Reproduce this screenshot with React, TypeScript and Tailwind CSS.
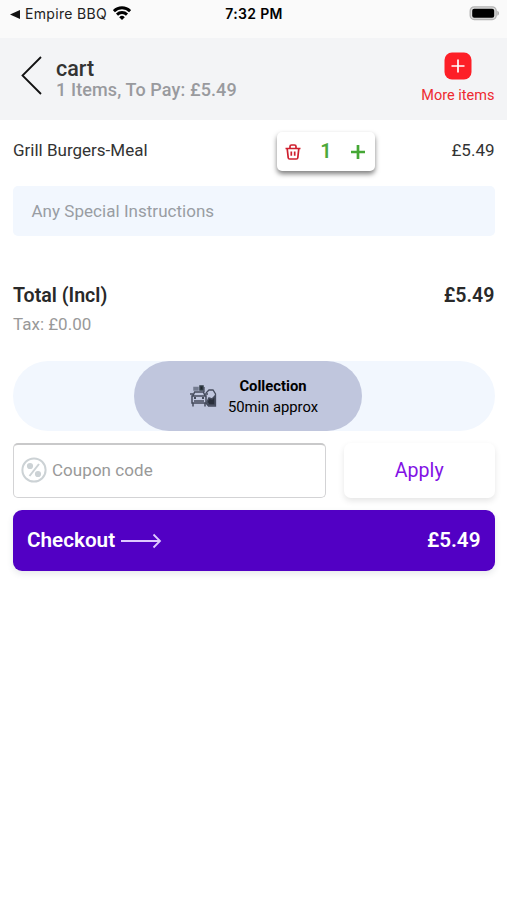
import React from "react";

function StatusBar() {
  return (
    <div className="grid h-[38px] grid-cols-3 items-start bg-[#fafafa] px-2 pt-[4px] font-['Inter'] text-[14px] leading-5 text-[#222]">
      <div className="flex items-center whitespace-nowrap">
        <svg className="mr-[5px] ml-[2px] h-[9px] w-[10px] shrink-0" viewBox="0 0 10 9" fill="#111">
          <path d="M0 4.5 10 0v9z" />
        </svg>
        <span className="w-[82px] tracking-[0.32px]">Empire BBQ</span>
        <svg className="mb-[2px] ml-[6px] h-[14px] w-[18px] shrink-0" viewBox="0 0 18 14" fill="none" stroke="#000" strokeWidth="2.9">
          <path d="M.9 5.1a11.5 11.5 0 0 1 16.2 0" />
          <path d="M4 8.6a7.1 7.1 0 0 1 10 0" />
          <path d="M9 14 6.2 11.2a4 4 0 0 1 5.6 0z" fill="#000" stroke="none" />
        </svg>
      </div>
      <div className="pl-px text-center font-semibold tracking-[0.35px] whitespace-nowrap text-black">7:32 PM</div>
      <div className="flex justify-end pt-[2px]">
        <svg className="h-[15px] w-[30px]" viewBox="0 0 30 15">
          <rect x="1.2" y=".9" width="26" height="12.6" rx="4" fill="#ddd" stroke="#b3b3b3" strokeWidth="1.3" />
          <rect x="3.2" y="2.7" width="22" height="9" rx="2" fill="#000" />
          <path d="M28.4 4.8v5c2-.8 2-4.2 0-5z" fill="#a5a5a5" />
        </svg>
      </div>
    </div>
  );
}

function Header() {
  return (
    <header className="flex h-[82px] items-start justify-between bg-[#f3f4f6] pr-[12.5px] pl-[21px]">
      <div className="flex">
        <svg className="mt-[18px] h-[39px] w-[21px]" viewBox="0 0 21 39" fill="none" stroke="#111" strokeWidth="1.8">
          <path d="M20 1 1.5 19.5 20 38" />
        </svg>
        <div className="pt-[19px] pl-[14px] font-medium whitespace-nowrap">
          <h1 className="text-[21.5px] leading-[23px] text-[#333]">cart</h1>
          <p className="text-[18px] leading-5 tracking-[0.12px] text-[#999a9e]">1 Items, To Pay: £5.49</p>
        </div>
      </div>
      <button className="flex flex-col items-center pt-[14px] text-[14.5px] leading-5 text-[#ee2a30]">
        <svg className="mb-[6px] ml-px h-7 w-7" viewBox="0 0 28 28">
          <rect x=".5" y=".5" width="27" height="27" rx="7.5" fill="#fd1f27" />
          <path d="M7.5 14h13M14 7.5v13" stroke="#fff" strokeWidth="1.7" />
        </svg>
        <span className="whitespace-nowrap">More items</span>
      </button>
    </header>
  );
}

function QuantityStepper() {
  return (
    <div className="flex h-[39px] w-[98px] items-center justify-between rounded-[5px] bg-white pr-[10px] pl-[8px] shadow-[0_3px_5px_rgba(0,0,0,0.5)]">
      <svg className="h-4 w-4" viewBox="0 0 16 16" fill="none" stroke="#cf202f" strokeWidth="1.7">
        <path d="M.5 4.5h15M2.2 4.5l1 9.2q.1 1.3 1.5 1.3h6.6q1.4 0 1.5-1.3l1-9.2M5 4V2.5Q5 1 6.5 1h3Q11 1 11 2.5V4M6.3 7.5v4.3M9.7 7.5v4.3" />
      </svg>
      <span className="pb-[2px] text-[20px] leading-6 font-semibold text-[#4ca93b]">1</span>
      <svg className="h-[14px] w-[14px]" viewBox="0 0 14 14" stroke="#45a735" strokeWidth="2.7">
        <path d="M0 7h14M7 0v14" />
      </svg>
    </div>
  );
}

function CollectionIcon() {
  return (
    <svg className="h-[24px] w-[27px]" viewBox="0 0 27 24" fill="none" stroke="#454b5c" strokeWidth="1.5">
      <path d="M3 11.5 4.7 8h8.6l1.7 3.5M2 12h14v7H2zM0 10h3M15 10h3M3 19v3.5M15 19v3.5M4 17h10" />
      <path d="M4 14h2M12 14h2" strokeWidth="2" />
      <path d="M4 3.5h4V6H4z" fill="#747c90" stroke="#747c90" />
      <path d="M10 2h3v4h-3z" fill="#20252d" stroke="#303c45" />
      <path d="M14 8V3M16 9l3-3h4l2.5 4v12h-7L16 19" strokeWidth="1.3" />
      <path d="m19 14 3 1 3-3v9h-6l-2-3z" fill="#292e3a" />
    </svg>
  );
}

export default function App() {
  return (
    <div className="min-h-[900px] w-[507px] bg-white font-['Roboto','Liberation_Sans',sans-serif] text-[#333]">
      <StatusBar />
      <Header />
      <main className="pt-3 pr-[12.5px] pl-[13px]">
        <div className="flex h-[39px] items-center text-[17px]">
          <span className="w-[264px] pb-[2px] whitespace-nowrap">Grill Burgers-Meal</span>
          <QuantityStepper />
          <span className="ml-auto pb-[2px]">£5.49</span>
        </div>
        <div className="mt-[15px] flex h-[50px] items-center rounded-[5px] bg-[#f2f7fe] pt-px pl-[18.5px] text-[17px] tracking-[0.03px] text-[#999da3]">
          Any Special Instructions
        </div>
        <div className="mt-[48px] flex justify-between text-[19.6px] leading-6 font-semibold text-[#292929]">
          <span>Total (Incl)</span>
          <span>£5.49</span>
        </div>
        <p className="mt-[6px] text-[17px] leading-5 text-[#999]">Tax: £0.00</p>
        <div className="mt-[27px] flex h-[70px] rounded-full bg-[#f2f7fe] pl-[121px]">
          <div className="flex h-[70px] w-[228px] items-center justify-center rounded-full bg-[#c0c6dd] pl-[12px] text-black">
            <CollectionIcon />
            <div className="mt-[2px] ml-[11px] text-center text-[14.8px] leading-[21px] whitespace-nowrap">
              <div className="font-bold">Collection</div>
              <div>50min approx</div>
            </div>
          </div>
        </div>
        <div className="mt-[12px] flex gap-[18px]">
          <div className="flex h-[55px] w-[313px] items-center rounded-[5px] border border-t-2 border-[#d3d3d5] border-t-[#c9c9ca] pl-[7px] text-[17px] tracking-[0.05px] text-[#999]">
            <svg className="mr-[5px] mb-[2px] h-[26px] w-[26px]" viewBox="0 0 26 26" fill="none" stroke="#ccd2d5" strokeWidth="2">
              <circle cx="13" cy="13" r="11.6" />
              <path d="m8.5 19 9.5-12" />
              <circle cx="9" cy="9" r="2.1" fill="#ccd2d5" />
              <circle cx="17" cy="17" r="2.1" fill="#ccd2d5" />
            </svg>
            Coupon code
          </div>
          <button className="h-[55px] flex-1 rounded-[7px] bg-white text-[19.6px] text-[#8212e5] shadow-[0_3px_6px_rgba(0,0,0,0.1)]">Apply</button>
        </div>
        <button className="mt-[12px] flex h-[61px] w-full items-center rounded-[9px] bg-[#5200c4] px-[14px] text-[20.7px] font-semibold text-white shadow-[0_3px_6px_rgba(60,70,90,0.12)]">
          <span>Checkout</span>
          <svg className="ml-[6px] h-[16px] w-[41px]" viewBox="0 0 41 16" fill="none" stroke="#dfc9ff" strokeWidth="1.8">
            <path d="M0 8h39M32.5 1.5 39 8l-6.5 6.5" />
          </svg>
          <span className="ml-auto">£5.49</span>
        </button>
      </main>
    </div>
  );
}
